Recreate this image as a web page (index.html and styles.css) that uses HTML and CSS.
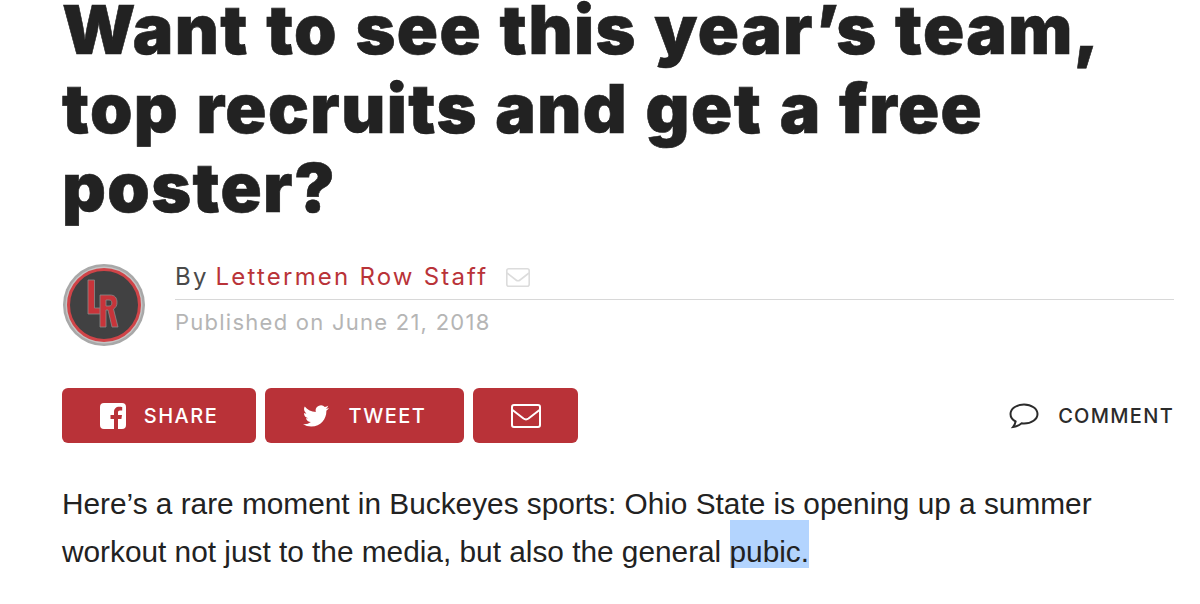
FILE: index.html
```html
<!DOCTYPE html>
<html lang="en">
<head>
<meta charset="utf-8">
<title>Want to see this year’s team</title>
<link rel="stylesheet" href="styles.css">
</head>
<body>
<article class="article">
  <h1 class="headline">Want to see this year’s team, top recruits and get a free poster?</h1>
  <div class="byline">
    <svg class="avatar" viewBox="0 0 84 84" aria-hidden="true">
      <circle cx="42" cy="42" r="41" fill="#a8a8a8"/>
      <circle cx="42" cy="42" r="38.500" fill="#c4c4c4"/>
      <circle cx="42" cy="42" r="35.500" fill="#414142" stroke="#d04448" stroke-width="3"/>
      <path d="M26 17h6.500v28H41v6H26z" fill="#c8343a" stroke="#8a8a8a" stroke-width=".8"/>
      <path fill-rule="evenodd" d="M38 32h10c5 0 7 3 7 7.500 0 3-1 5-3.500 6.500L56 64h-6l-4-17h-2v17h-6zm6 5v6h3c2 0 2.800-1 2.800-3s-.8-3-2.800-3z" fill="#c8343a" stroke="#8a8a8a" stroke-width=".8"/>
    </svg>
    <div class="meta">
      <div class="author"><span class="by">By</span> <a class="name">Lettermen Row Staff</a>
        <svg class="mail-small" viewBox="0 0 24 20" aria-hidden="true"><rect x=".8" y=".8" width="22.400" height="17.400" rx="2"/><path d="M1 5l9 7c1.200.9 2.800.9 4 0l9-7"/></svg>
      </div>
      <div class="published">Published on June 21, 2018</div>
    </div>
  </div>
  <div class="actions">
    <a class="btn btn-share">
      <svg class="ico" viewBox="0 0 26 26" aria-hidden="true"><path fill="#fff" d="M4 0h18a4 4 0 0 1 4 4v18a4 4 0 0 1-4 4h-4V16h3.400l.6-4h-4V9.500c0-1.200.5-2 2-2h2.200V4c-.6-.1-1.800-.2-3-.2-3.200 0-5.200 1.900-5.200 5.300V12H10.500v4H14v10H4a4 4 0 0 1-4-4V4a4 4 0 0 1 4-4z"/></svg>
      <span>SHARE</span>
    </a>
    <a class="btn btn-tweet">
      <svg class="ico ico-tw" viewBox="0 0 24 24" aria-hidden="true"><path fill="#fff" d="M23.950 4.570a10 10 0 0 1-2.820.77 4.960 4.960 0 0 0 2.160-2.720c-.95.550-2 .96-3.130 1.180a4.920 4.920 0 0 0-8.380 4.480C7.690 8.090 4.070 6.130 1.640 3.160a4.820 4.820 0 0 0-.67 2.480c0 1.710.87 3.210 2.190 4.100a4.900 4.900 0 0 1-2.230-.62v.06a4.920 4.920 0 0 0 3.950 4.830 5 5 0 0 1-2.210.08 4.940 4.940 0 0 0 4.600 3.420A9.870 9.870 0 0 1 0 19.540a14 14 0 0 0 7.560 2.210c9.050 0 14-7.500 14-13.980 0-.21 0-.42-.02-.63a9.940 9.940 0 0 0 2.410-2.550z"/></svg>
      <span>TWEET</span>
    </a>
    <a class="btn btn-mail">
      <svg class="ico-mail" viewBox="0 0 30 24" aria-hidden="true"><rect x="1" y="1" width="28" height="22" rx="2"/><path d="M1.500 6l11 8.500c1.500 1.100 3.500 1.100 5 0l11-8.500"/></svg>
    </a>
    <a class="comment">
      <svg class="ico-comment" viewBox="0 0 30 26" aria-hidden="true"><path d="M15 1.500C7.500 1.500 1.500 5.700 1.500 11c0 3.100 2 5.800 5.100 7.500-.3 1.800-1.200 3.700-2.600 5.500 3.200-.4 6.400-1.800 8.700-3.700.7.100 1.500.2 2.300.2 7.500 0 13.500-4.200 13.500-9.500S22.500 1.500 15 1.500z"/></svg>
      <span>COMMENT</span>
    </a>
  </div>
  <p class="lede">Here’s a rare moment in Buckeyes sports: Ohio State is opening up a summer workout not just to the media, but also the general <mark class="hl">pubic.</mark></p>
</article>
</body>
</html>
```
FILE: styles.css
```css
* { box-sizing: border-box; }
html, body { margin: 0; padding: 0; background: #fff; overflow: hidden; }
body { height: 604px; }
.article { padding: 0 26px 0 62px; }
.headline {
  margin: -10px 0 0;
  font: 900 68px/79px Inter, "Liberation Sans", sans-serif;
  letter-spacing: 1.400px;
  word-spacing: 2.500px;
  -webkit-text-stroke: 0.6px #222;
  color: #222;
  width: 1060px;
}
.byline { display: flex; margin-top: 36px; }
.avatar { width: 84px; height: 84px; flex: none; }
.meta { flex: 1; margin-left: 29px; }
.author {
  display: flex; align-items: flex-start;
  height: 37px;
  padding-top: 1px;
  border-bottom: 1px solid #d8d8d8;
  font: 400 24px/26px Inter, sans-serif;
  letter-spacing: 2.200px;
  color: #4a4a4a;
}
.by { margin-right: 7px; }
.name { color: #b93338; }
.mail-small { width: 24px; height: 20px; margin: 4px 0 0 18px; fill: none; stroke: #dcdcdc; stroke-width: 1.600; }
.published {
  margin-top: 7px;
  font: 400 22px/30px Inter, sans-serif;
  letter-spacing: 1.250px;
  color: #b5b5b5;
}
.actions { display: flex; align-items: center; gap: 9px; margin-top: 41px; }
.btn {
  display: flex; align-items: center; justify-content: center;
  height: 55px;
  background: #b93238;
  border-radius: 6px;
  color: #fff;
  font: 500 20px/24px Inter, sans-serif;
  letter-spacing: 1.500px;
}
.btn-share { width: 194px; gap: 18px; }
.btn-tweet { width: 199px; gap: 20px; }
.btn-mail { width: 105px; }
.ico { width: 26px; height: 26px; }
.ico-mail { width: 30px; height: 24px; fill: none; stroke: #fff; stroke-width: 2; }
.comment {
  display: flex; align-items: center; gap: 19px;
  margin-left: auto;
  font: 500 20px/24px Inter, sans-serif;
  letter-spacing: 1.300px;
  color: #2b2b2b;
}
.ico-comment { width: 30px; height: 26px; fill: none; stroke: #2b2b2b; stroke-width: 2; }
.lede {
  margin: 37px 0 0;
  font: 400 29.800px/48px "Liberation Sans", Arial, sans-serif;
  color: #222;
}
.hl { display: inline-block; height: 48px; line-height: 64px; margin-top: -8px; background: #b3d4fe; color: inherit; }
```
